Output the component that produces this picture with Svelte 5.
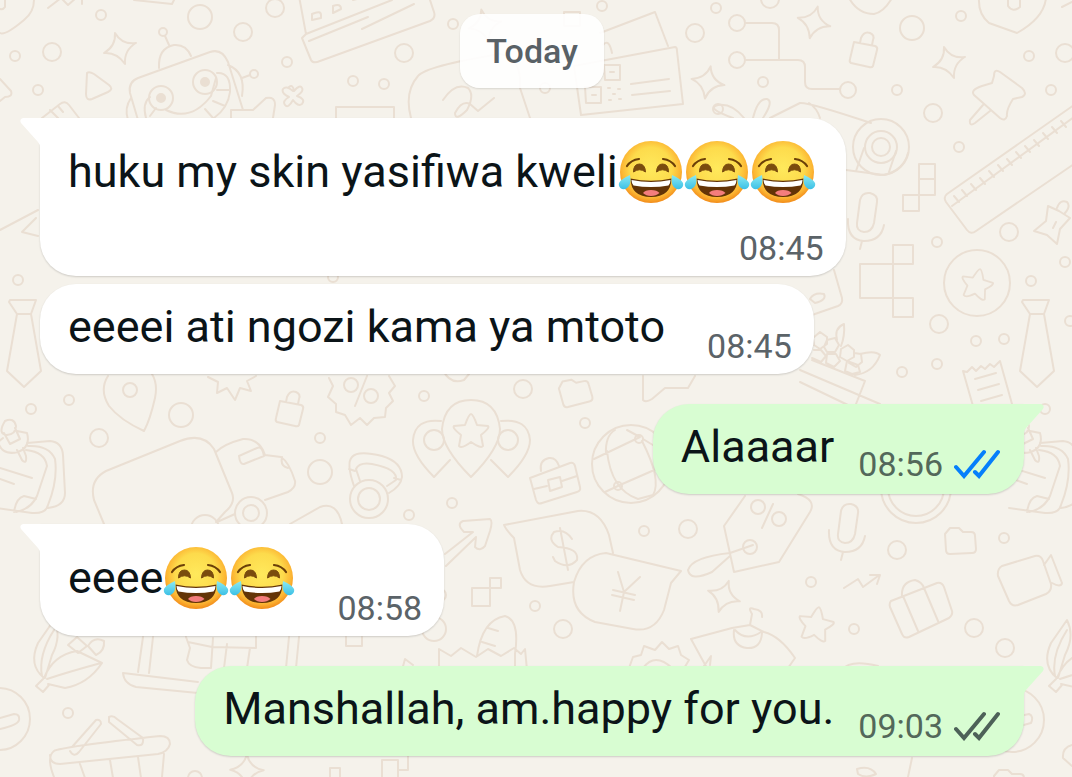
<script>
	const groups = [
		[
			{ text: 'huku my skin yasifiwa kweli', laughs: 3, time: '08:45', stacked: true },
			{ text: 'eeeei ati ngozi kama ya mtoto', laughs: 0, time: '08:45', roomy: true },
		],
		[{ text: 'Alaaaar', laughs: 0, time: '08:56', out: true, read: true }],
		[{ text: 'eeee', laughs: 2, time: '08:58', roomy: true }],
		[{ text: 'Manshallah, am.happy for you.', laughs: 0, time: '09:03', out: true }],
	];

	// wallpaper dots: x, y, radius
	const dots = [
		[101, 15, 5], [200, 17, 12], [275, 8, 9], [243, 32, 9], [52, 52, 9], [15, 56, 5],
		[38, 90, 5], [163, 32, 4], [254, 74, 4], [287, 62, 5], [353, 81, 5], [404, 53, 9],
		[453, 24, 5], [384, 84, 5], [602, 6, 5], [695, 33, 9], [716, 8, 5], [718, 109, 5],
		[545, 88, 5], [770, -1, 9], [737, 23, 8], [737, 60, 8], [848, 90, 8], [763, 82, 5],
		[897, 90, 5], [912, 28, 12], [961, 16, 5], [1029, 56, 5], [1065, 53, 9], [1051, 90, 5],
		[933, 113, 9], [959, 147, 5], [881, 147, 28], [881, 147, 16], [881, 147, 9],
		[937, 242, 5], [1009, 232, 9], [977, 283, 33], [1065, 262, 5], [1031, 281, 5],
		[939, 324, 9], [976, 341, 5], [1004, 339, 5], [1070, 321, 5], [937, 364, 5],
		[902, 372, 5], [1045, 409, 5], [18, 280, 5], [69, 400, 5], [31, 409, 5], [130, 390, 7],
		[181, 415, 12], [99, 438, 9], [320, 438, 5], [320, 472, 12], [251, 513, 16], [251, 513, 8],
		[205, 529, 14], [351, 385, 7], [371, 396, 7], [424, 396, 5], [523, 389, 9], [585, 423, 5],
		[452, 503, 5], [409, 515, 5], [369, 499, 19], [369, 499, 11], [434, 440, 10],
		[508, 440, 10], [631, 464, 39], [639, 439, 4], [618, 486, 4], [644, 531, 5],
		[535, 606, 5], [563, 629, 9], [434, 629, 12], [688, 529, 9], [758, 507, 7],
		[779, 519, 7], [750, 547, 7], [897, 550, 9], [1004, 538, 5], [811, 582, 5],
		[854, 629, 5], [974, 628, 9], [1005, 648, 9], [916, 488, 35], [916, 488, 28],
		[68, 713, 5], [-1, 719, 31], [195, 778, 7], [1012, 720, 32], [161, 98, 12],
		[205, 82, 12], [333, 277, 5], [440, 595, 6],
	];

	// x, y, rotation
	const sparkles = [
		[120, 48, 0], [485, 25, 5], [814, 22, 32], [949, 62, 0], [708, 82, 28], [724, 596, 36], [247, 770, 18],
	];
</script>

<svelte:head>
	<title>Chat</title>
</svelte:head>

{#snippet laugh()}
	<svg class="laugh" viewBox="0 0 66 66" role="img" aria-label="😂">
		<circle cx="33" cy="33" r="31" fill="url(#face)" />
		<path d="M9 27Q13 21 21 20M45 20Q53 21 57 27" fill="none" stroke="#6b3f08" stroke-width="2.2" stroke-linecap="round" />
		<path d="M15.500 33Q15.500 25 21.500 25Q27 25 27.500 33Q21.500 28.500 15.500 33ZM38.500 33Q39 25 44.500 25Q50.500 25 50.500 33Q44.500 28.500 38.500 33Z" fill="#7a4c0e" stroke="#7a4c0e" stroke-width="1" stroke-linejoin="round" />
		<path d="M12.500 39.500Q33 44 53.500 39.500Q53 58 33 58Q13 58 12.500 39.500Z" fill="#633407" />
		<path d="M13.500 41Q33 45 52.500 41Q52.500 44.500 50.500 46.500Q33 49.500 15.500 46.500Q13.500 44.500 13.500 41Z" fill="#fff" />
		<path d="M25 54Q27 51 33 51Q39 51 41.500 54Q38 57 33 57Q28 57 25 54Z" fill="#f47d7d" />
		<path d="M12 36Q13 43 11.500 46Q9 51 4 50Q0 48 1 44Q3 40 12 36ZM54 36Q53 43 54.500 46Q57 51 62 50Q66 48 65 44Q63 40 54 36Z" fill="url(#tear)" />
	</svg>
{/snippet}

<svg class="defs" aria-hidden="true">
	<defs>
		<radialGradient id="face" cx="50%" cy="44%" r="56%">
			<stop offset="0" stop-color="#ffe95c" />
			<stop offset="0.600" stop-color="#fddb4c" />
			<stop offset="0.850" stop-color="#fcb533" />
			<stop offset="1" stop-color="#f28c1a" />
		</radialGradient>
		<linearGradient id="tear" x1="0" y1="0" x2="0" y2="1">
			<stop offset="0" stop-color="#8beaf2" />
			<stop offset="1" stop-color="#3cc0e6" />
		</linearGradient>
	</defs>
</svg>

<main class="chat">
	<svg class="wallpaper" viewBox="0 0 1072 777" preserveAspectRatio="xMidYMin slice" aria-hidden="true">
		<defs>
			<path id="sparkle" d="M-5 -15Q2 -3 16 -5Q4 2 5 16Q-3 4 -16 5Q-4 -2 -5 -15Z" />
			<path id="star" d="M0 -17Q2 -17 6 -6L17 -5Q19 -3 10 4L12 15Q10 18 0 11Q-9 18 -12 15L-10 4Q-19 -3 -17 -5L-6 -6Q-2 -17 0 -17Z" />
			<path id="lock" d="M-10 -8L11 -4Q14 -3 13 0L9 16Q8 18 5 17L-13 13Q-15 12 -14 9L-10 -8ZM-4 -7L-3 -12Q0 -19 6 -17Q11 -15 9 -10L8 -5" />
			<path id="tie" d="M-14 -43H12L7 -29L17 28L0 44L-17 28L-7 -29L-15 -41ZM-7 -29H7" />
			<path id="mic" d="M-8 10L-5 -13Q-3 -21 5 -20Q13 -18 12 -11L9 10Q7 19 -1 19Q-9 18 -8 10ZM-17 6Q-18 27 -1 28Q16 28 19 12M-3 28L-5 36" />
			<path id="pin" d="M2 -26L24 -10Q30 -4 24 -1L15 1Q8 12 9 18Q7 24 2 20L-24 -3Q-28 -8 -16 -12L-6 -15L-4 -22Q-4 -30 2 -26M-15 7L-28 22Q-29 29 -23 25L-8 13" />
			<path id="folder" d="M-16 -7L-11 -13H-2L2 -9H10Q14 -9 14 -5L15 8Q15 12 11 12L-11 13Q-15 13 -15 9Z" />
		</defs>

		{#each dots as [x, y, r]}
			<circle cx={x} cy={y} {r} />
		{/each}
		{#each sparkles as [x, y, turn]}
			<use href="#sparkle" transform="translate({x} {y}) rotate({turn})" />
		{/each}
		<use href="#star" transform="translate(471 431)" />
		<use href="#star" transform="translate(977 284) rotate(12) scale(0.900)" />
		<use href="#star" transform="translate(816 624) rotate(10)" />
		<use href="#lock" transform="translate(864 50)" />
		<use href="#lock" transform="translate(290 409)" />
		<use href="#tie" transform="translate(24 343)" />
		<use href="#tie" transform="translate(1037 343)" />
		<use href="#mic" transform="translate(865 213)" />
		<use href="#mic" transform="translate(846 524)" />
		<use href="#pin" transform="translate(998 98)" />
		<use href="#folder" transform="translate(961 541)" />
		<use href="#folder" transform="translate(576 392) rotate(-12)" />
		<use href="#folder" transform="translate(1010 783)" />

		<!-- robot -->
		<circle cx="161" cy="98" r="4" class="solid" />
		<circle cx="205" cy="82" r="4" class="solid" />
		<path d="M138 120L130 93Q128 82 138 78L210 52Q222 48 228 62L243 110M159 68Q158 48 174 45Q186 44 191 56M169 45L165 36M228 65Q246 72 242 96M242 78L250 75M131 98Q124 108 128 120M150 97Q142 103 146 118M150 116L156 108M166 110Q191 122 211 96L216 78M217 73Q231 72 230 92Q228 108 214 118M217 90H229M213 101L225 106M205 109L213 118" />
		<!-- shield, arrow, gamepad along the top edge -->
		<path d="M0 33Q5 36 24 20Q34 12 34 0M5 0V7Q3 10 0 9M48 8L61 -2L68 5L76 -2M82 -2V4M134 0L172 4L175 -2M87 73Q89 71 94 74L109 85Q114 89 108 92L92 99Q86 101 86 94ZM0 79L11 91Q13 97 5 97L0 101M42 118L60 104Q65 100 69 105L79 118M50 110L58 118M58 106L63 112" />
		<path d="M289 87Q293 84 294 91Q300 84 302 88Q304 91 297 96Q306 99 302 104Q298 107 293 100Q288 109 285 105Q282 101 289 97Q281 93 283 89Q286 85 293 91M231 118V110H253L266 98Q275 96 275 105L273 118M336 118V107H394V118" />
		<!-- building -->
		<path d="M299 -4L306 34L302 38L311 60Q313 64 320 61L430 21Q436 18 434 12L428 -6M306 34L392 0M309 41L368 17M362 29L414 4M309 -2L317 -4M312 14Q321 10 321 15L321 18L312 20ZM333 6Q341 3 341 9L333 13ZM353 0L361 -2" />
		<path d="M411 118Q404 92 418 76Q426 66 500 54Q522 58 520 88L530 118M443 100Q455 82 468 88Q475 95 467 110Q455 122 455 113Q462 100 470 104L478 111L494 98" />
		<!-- tickets with a code -->
		<path d="M574 66L675 47Q677 47 677 51L683 104L581 115ZM600 33L655 12L668 46M604 65H620V80H605ZM585 87H601V103H586ZM631 84L669 79M632 95L670 91M610 72H614M592 95H596M608 88H610M618 89H620M613 94H615M609 100H611M619 99H621M564 12H580V26H564ZM603 45Q609 38 612 53" />
		<!-- circuit -->
		<path d="M746 23H772Q779 23 779 30V60M746 60H798Q805 60 805 67V82Q805 89 812 89H840M849 -2Q858 14 874 14Q884 12 892 -2M979 -2Q978 14 989 23L1017 33Q1044 18 1046 -2M1008 0V6Q1013 13 1020 7V-2M1062 7L1072 2" />
		<path d="M733 118Q705 108 718 105Q732 103 744 118M753 118Q758 98 767 99Q774 101 763 118M770 118L800 103Q808 102 871 123M809 103Q817 108 820 118M846 170L884 175Q904 170 908 153M864 148L856 171M896 151L889 172" />
		<path d="M919 164H935V195H919ZM919 179H935M903 195H919V211H903ZM893 245H913V264H860V298H913V317H893Z" />
		<!-- ruler -->
		<path d="M1074 105L947 194Q943 197 946 202L967 230Q971 235 976 231L1074 164M952 206L1074 117M954 196L959 202M962 190L967 196M971 184L976 190M980 178L985 184M989 171L994 177M998 165L1003 171M1007 159L1012 165M1016 152L1021 158M1025 146L1030 152M1034 140L1039 146M1043 133L1048 139M1052 127L1057 133M1061 121L1066 127" />
		<path d="M1048 206L1059 211L1070 218L1060 229L1057 244L1047 235L1034 231L1046 221ZM1057 208Q1060 199 1067 202Q1071 206 1065 213M1053 228L1056 222M0 230L38 210M38 236L22 232L36 218" />
		<!-- basket of fruit -->
		<path d="M834 270L842 298Q843 304 838 306L812 315M810 299Q814 292 824 294Q827 300 815 303ZM812 360L865 381L856 404M800 370L880 404M800 382L850 406M837 340Q834 328 844 324Q845 336 841 346M860 354Q875 350 880 355Q873 373 855 375M813 338L820 332L827 337V344L820 349L814 345ZM827 340L835 338L839 345L835 352L827 352L824 347ZM841 349L848 345L854 350V357L847 361L840 357ZM854 353L861 354L862 362L856 367L849 363M814 350L821 350L826 356L821 362L812 358M827 354L836 354L840 361L834 367L826 363ZM847 361L858 365L860 372L852 374L845 371Z" />
		<path d="M963 371L967 372L972 367L976 371L981 366L985 369L990 364L994 367L1000 361L1012 404M963 371L973 406M975 379L996 373M978 390L999 384M981 401L1002 395" />
		<!-- folded notes and pushpin on both edges -->
		<g id="notes">
			<path d="M5 421Q14 417 16 426Q16 434 7 435Q-3 434 5 421M4 433L10 444L20 439L15 428M3 438L-2 442Q2 456 18 452Q31 447 27 433L17 431M17 450L22 460Q27 465 26 456L23 448M27 443L50 441Q62 442 63 455L65 493Q65 506 48 508M28 446Q49 445 55 459Q58 480 48 505Q46 514 32 513L-4 508M26 450Q45 452 47 466L37 496Q31 509 16 512M14 512Q16 498 24 496L36 499M0 468L32 478M0 479L14 484" />
		</g>
		<use href="#notes" x="1013" />
		<!-- map pins and badge -->
		<path d="M108 376Q99 390 109 406Q120 420 144 431Q150 420 155 398Q158 384 152 374M208 377L218 382L217 393L227 388L235 400L240 388L251 391L247 381L256 376M329 378L333 386L328 397L336 404L336 412L345 415L351 425L360 418L367 425L374 418L385 417L386 408L393 401L389 393L395 386L389 376M367 376L355 406M443 370Q450 385 464 380L469 374" />
		<path d="M471 477Q442 448 442 429Q445 400 471 400Q497 400 500 429Q500 448 471 477ZM441 421Q415 418 413 440Q412 455 434 477L450 460M501 421Q528 418 530 440Q530 455 508 477L491 460M643 376V400Q646 403 652 399L665 388H688L695 376" />
		<!-- board and jeep -->
		<path d="M104 524L94 500Q89 480 106 471L180 441Q203 432 214 449L232 493Q236 503 225 512L216 522M216 452Q224 444 243 439Q256 438 263 450L265 455L281 457Q289 462 295 481Q296 488 288 492L265 500M239 456L257 448Q261 446 263 452L264 456L244 464Q240 465 239 456ZM282 457Q280 466 288 468M217 522L235 514M290 524L320 507Q337 501 342 524" />
		<path d="M354 486Q346 463 352 457Q358 450 382 456Q402 462 402 477Q401 486 389 493M360 481L356 469Q359 462 372 464Q398 469 396 480L387 486M349 469L355 471M394 478L401 480" />
		<!-- briefcase and ball -->
		<path d="M530 478L570 463Q574 462 575 466L580 487Q581 491 577 492L542 503Q538 505 536 500L530 478ZM534 489L547 486M562 481L577 476M548 480L560 477L562 487L550 491ZM541 471Q539 460 549 458Q556 457 559 466M594 459L640 437L627 430M643 439L661 450M606 454Q605 436 615 430M607 451Q611 490 638 499M642 441Q662 480 653 495L638 499M605 492L620 485L668 464" />
		<!-- speech bubbles with coins -->
		<path d="M504 525L578 511Q600 509 609 535L613 553M504 525Q506 530 514 538L520 570Q526 590 550 586L574 582M572 539Q565 528 554 532Q547 540 558 547Q579 548 577 560Q568 570 555 561L553 557M560 528L568 570M606 553Q582 555 574 582Q569 612 595 622L633 629Q655 633 664 610L671 583L681 571L606 553ZM618 572L624 592L640 577M613 590L635 595M612 595L634 600M624 592L620 611" />
		<path d="M445 554L473 532L464 532Q456 524 463 521L490 519Q493 521 490 531L485 546Q480 552 475 547L476 537L446 566M472 588H490V606H472ZM490 578H501V588H490V578M439 655V649L451 656L461 648L476 657L488 649L501 656L514 648L521 654L525 649L527 670M439 655V670M477 656Q482 620 505 616Q520 620 515 654V670M482 642L495 646M488 628L498 631M402 670L405 659L413 665M629 668L633 657L641 655L644 646L655 650L662 642L669 649L678 646L681 655L689 660L683 670M643 668Q655 652 672 668" />
		<!-- price tag and shirt -->
		<path d="M745 496L724 526L734 572L779 562L810 512Q817 500 798 494M773 504L762 528M753 545L730 553Q692 557 688 570Q690 582 712 572L730 556M708 670L691 639L732 628L750 625L752 614Q747 606 754 609Q763 610 762 617M750 625L764 632Q780 636 795 658L788 668M734 630Q732 646 747 648Q761 649 762 633M735 630Q746 642 761 632M704 666L711 656L710 665" />
		<path d="M844 588L858 579L863 587L878 576M870 575H880L877 584M891 601L937 583Q942 582 944 587L952 611Q953 615 949 618L909 637Q904 639 902 634L890 607Q889 603 891 601M903 596L918 631M924 588L938 621M902 596Q901 582 915 580Q922 582 924 588M1002 566L1035 556Q1041 555 1043 561L1051 584Q1052 591 1046 594L1018 605Q1012 607 1009 601L998 576Q997 569 1002 566M1044 565L1051 555L1062 583Q1061 588 1052 583M842 670Q850 659 878 666" />
		<!-- corn, laptop, shopping basket -->
		<g id="corn">
			<path d="M44 678Q28 665 38 643L54 620Q62 636 52 655L45 678M42 676Q38 655 54 630M44 678Q53 655 77 651L102 663Q88 684 65 688L48 684M47 679Q68 672 101 663M43 679L36 686L43 692L49 685M68 645L77 637L87 646L78 653ZM88 646Q94 636 104 641Q105 651 96 655Z" />
		</g>
		<use href="#corn" x="1013" />
		<path d="M143 637L138 672M153 637L149 673M123 673L198 682M123 673Q124 684 136 687L198 693M186 637L190 648L187 660Q189 667 201 668H211L213 638M227 644L224 668M188 642L212 647L256 648V637M250 648L247 668M289 637L286 668M299 637L296 668M346 637V646H362V637" />
		<path d="M54 777Q46 757 54 751Q60 747 160 736Q170 736 170 744Q168 752 158 754L60 764Q50 764 50 755M72 747L96 720Q101 719 101 724L79 752Q74 758 70 751M109 717Q113 715 117 719L143 738Q144 747 137 745L109 722ZM80 764L85 778M110 760L113 778M138 757L141 778M164 754L162 777M0 718L14 714Q20 714 19 720Q18 725 0 729M330 777V768H340V777M382 777V760H398V777M398 770H408V756M912 758L908 777M857 769Q870 765 876 774Q866 779 858 774ZM1020 716L1029 714Q1034 716 1031 723L1020 726M1072 745Q1062 748 1063 758L1072 766" />
	</svg>

	<time class="day">Today</time>

	{#each groups as group}
		<section class="group">
			{#each group as message, i}
				<article
					class="bubble"
					class:out={message.out}
					class:tailed={i === 0}
					class:stacked={message.stacked}
					class:roomy={message.roomy}
				>
					{#if i === 0}
						<svg class="tail" viewBox="0 0 22 30" aria-hidden="true">
							<path d="M22 0H3Q-1 1 1 5L18 24Q20 26 20 30H22Z" />
						</svg>
					{/if}
					<p class="text" class:tall={message.laughs > 0}>{message.text}{#each { length: message.laughs } as _}{@render laugh()}{/each}</p>
					<div class="meta">
						<time>{message.time}</time>
						{#if message.out}
							<svg class="ticks" class:read={message.read} viewBox="0 0 46 30" role="img" aria-label={message.read ? 'Read' : 'Delivered'}>
								<path d="M2 18L10 27L30 3M21 23L25 27L44 3" />
							</svg>
						{/if}
					</div>
				</article>
			{/each}
		</section>
	{/each}
</main>

<style>
	:global(body) {
		background: #f5f2eb;
	}

	.defs {
		position: absolute;
		width: 0;
		height: 0;
	}

	.chat {
		position: relative;
		isolation: isolate;
		box-sizing: border-box;
		min-height: 100vh;
		padding: 14px 48px 20px 40px;
		display: flex;
		flex-direction: column;
		gap: 30px;
		overflow: hidden;
		background: #f5f2eb;
		color: #0b1418;
		font-family: Roboto, sans-serif;
	}

	.wallpaper {
		position: absolute;
		inset: 0;
		z-index: -1;
		width: 100%;
		height: 100%;
		fill: none;
		stroke: #eadfd3;
		stroke-width: 2;
		stroke-linecap: round;
		stroke-linejoin: round;
	}

	.wallpaper .solid {
		fill: #eadfd3;
	}

	.day {
		align-self: center;
		padding: 17px 26px;
		border-radius: 20px;
		background: rgba(255, 255, 255, 0.9);
		box-shadow: 0 1px 2px rgba(0, 0, 0, 0.12);
		color: #596166;
		font-size: 34px;
		font-weight: 500;
		line-height: 40px;
	}

	.group {
		display: flex;
		flex-direction: column;
		align-items: flex-start;
		gap: 8px;
	}

	.bubble {
		position: relative;
		display: flex;
		align-items: flex-end;
		gap: 24px;
		padding: 17px 22px 8px 28px;
		border-radius: 36px;
		background: #fff;
		box-shadow: 0 1px 2px rgba(0, 0, 0, 0.16);
	}

	.bubble.roomy {
		gap: 42px;
	}

	.bubble.tailed {
		border-top-left-radius: 0;
	}

	.bubble.stacked {
		flex-direction: column;
		gap: 6px;
	}

	.bubble.stacked .text {
		align-self: flex-start;
		margin-right: 8px;
	}

	.bubble.out {
		align-self: flex-end;
		padding-right: 24px;
		background: #d8fdd2;
	}

	.bubble.out.tailed {
		border-top-left-radius: 36px;
		border-top-right-radius: 0;
	}

	.tail {
		position: absolute;
		top: 0;
		left: -20px;
		width: 22px;
		height: 30px;
		fill: #fff;
	}

	.out .tail {
		left: auto;
		right: -20px;
		transform: scaleX(-1);
		fill: #d8fdd2;
	}

	.text {
		margin: 0 0 13px;
		font-size: 45px;
		line-height: 52px;
	}

	.text.tall {
		line-height: 74px;
	}

	.laugh {
		width: 66px;
		height: 66px;
		vertical-align: -18px;
	}

	.meta {
		display: flex;
		align-items: center;
		gap: 11px;
		color: #5b6368;
		font-size: 34px;
		line-height: 40px;
	}

	.out .meta {
		margin-bottom: 2px;
		color: #53685a;
	}

	.ticks {
		width: 46px;
		height: 30px;
		fill: none;
		stroke: #4d6158;
		stroke-width: 4;
		stroke-linecap: round;
	}

	.ticks.read {
		stroke: #067ffb;
	}
</style>
